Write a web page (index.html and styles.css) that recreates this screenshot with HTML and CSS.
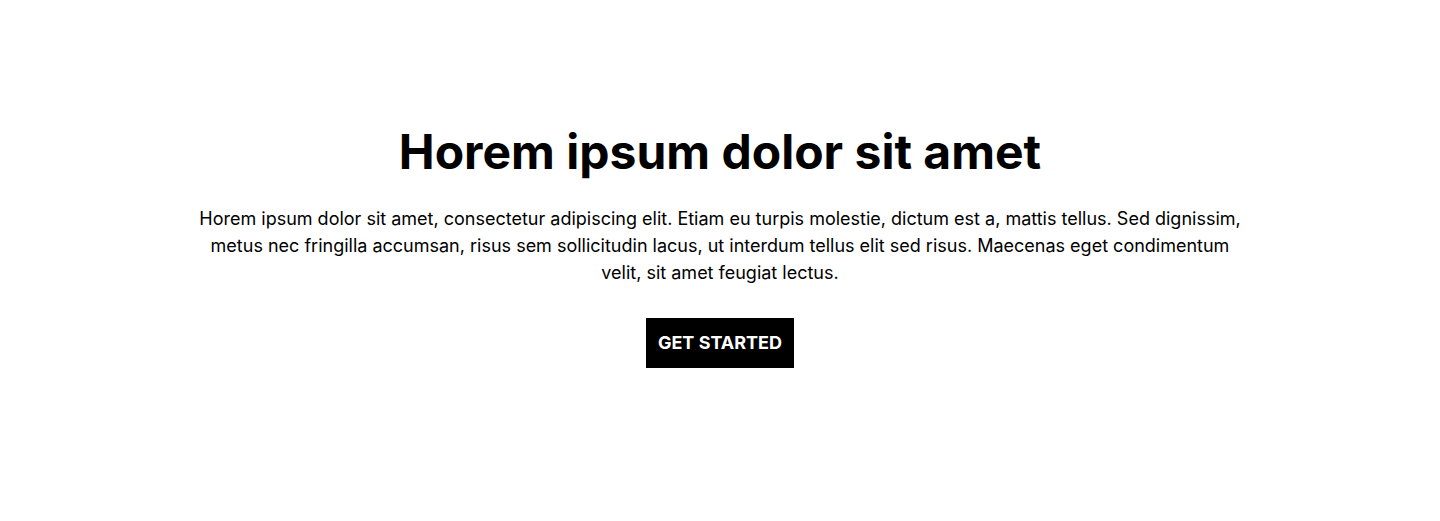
FILE: index.html
```html
<!DOCTYPE html>
<html lang="en">
<head>
<meta charset="utf-8">
<title>Hero</title>
<link rel="stylesheet" href="styles.css">
</head>
<body>
<section class="hero">
  <h1 class="hero-title">Horem ipsum dolor sit amet</h1>
  <p class="hero-text">Horem ipsum dolor sit amet, consectetur adipiscing elit. Etiam eu turpis molestie, dictum est a, mattis tellus. Sed dignissim, metus nec fringilla accumsan, risus sem sollicitudin lacus, ut interdum tellus elit sed risus. Maecenas eget condimentum velit, sit amet feugiat lectus.</p>
  <a class="hero-button" href="#">GET STARTED</a>
</section>
</body>
</html>
```
FILE: styles.css
```css
html, body {
  margin: 0;
  padding: 0;
  background: #fff;
}
body {
  font-family: Inter, "Noto Sans", sans-serif;
  color: #000;
}
.hero {
  display: flex;
  flex-direction: column;
  align-items: center;
  text-align: center;
  padding: 123px 24px 0;
}
.hero-title {
  margin: 0 0 24px;
  font-size: 48px;
  line-height: 1.2;
  font-weight: 700;
}
.hero-text {
  margin: 0 0 32px;
  max-width: 1050px;
  font-size: 18px;
  line-height: 27px;
}
.hero-button {
  display: inline-block;
  background: #000;
  color: #fff;
  text-decoration: none;
  font-weight: 700;
  font-size: 18px;
  line-height: 26px;
  padding: 12px 12px;
}
```
